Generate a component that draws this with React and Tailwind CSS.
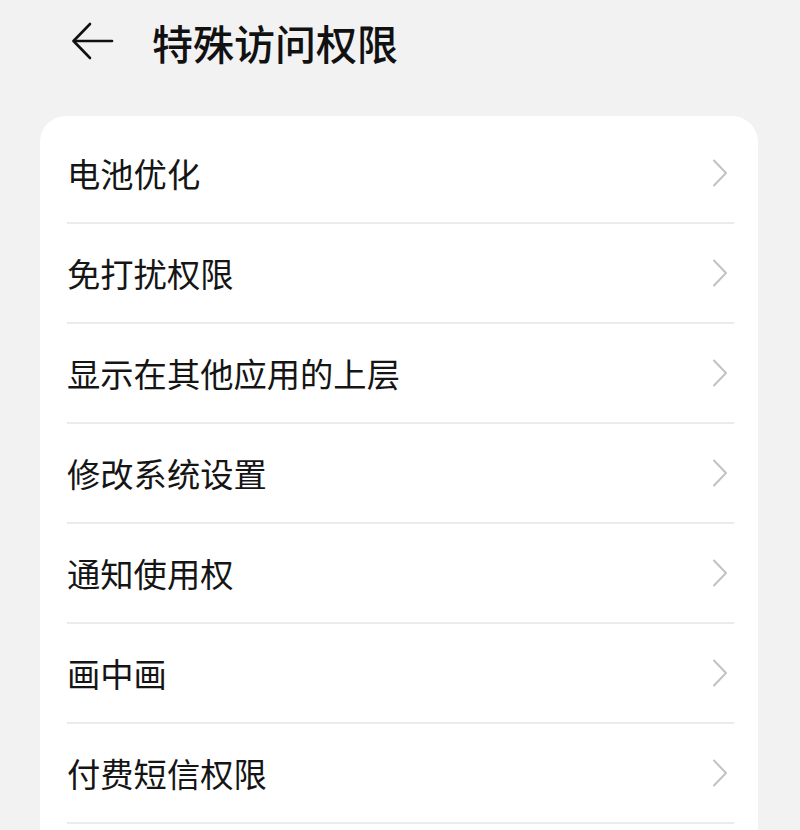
const items = [
  '电池优化',
  '免打扰权限',
  '显示在其他应用的上层',
  '修改系统设置',
  '通知使用权',
  '画中画',
  '付费短信权限',
]

function BackArrow() {
  return (
    <svg width="44" height="40" viewBox="0 0 44 40" fill="none" stroke="#111" strokeWidth="2.6" strokeLinecap="round" strokeLinejoin="round">
      <path d="M42 20H4" />
      <path d="M20 3L3.5 20L20 37" />
    </svg>
  )
}

function Chevron() {
  return (
    <svg width="16" height="28" viewBox="0 0 16 28" fill="none" stroke="#c2c2c2" strokeWidth="2" strokeLinecap="round" strokeLinejoin="round">
      <path d="M2 1.5L14 14L2 26.5" />
    </svg>
  )
}

export default function App() {
  return (
    <div
      className="h-[830px] w-[800px] overflow-hidden bg-[#f2f2f3]"
      style={{ fontFamily: '"Noto Sans CJK SC", "Noto Sans", sans-serif' }}
    >
      <header className="flex h-[116px] items-start pt-[19px]">
        <div className="ml-[70px] mt-[2px]">
          <BackArrow />
        </div>
        <h1 className="ml-[38px] text-[41px] font-medium leading-[46px] text-[#111]">特殊访问权限</h1>
      </header>
      <div className="ml-[40px] w-[718px] rounded-[26px] bg-white pb-[40px] pt-[8px]">
        {items.map((label) => (
          <div key={label} className="flex h-[100px] flex-col">
            <div className="flex flex-1 items-center justify-between pl-[27px] pr-[30px]">
              <span className="text-[33.3px] leading-none text-[#151515]">{label}</span>
              <Chevron />
            </div>
            <div className="ml-[27px] mr-[24px] h-[2px] bg-[#ebebeb]" />
          </div>
        ))}
      </div>
    </div>
  )
}
